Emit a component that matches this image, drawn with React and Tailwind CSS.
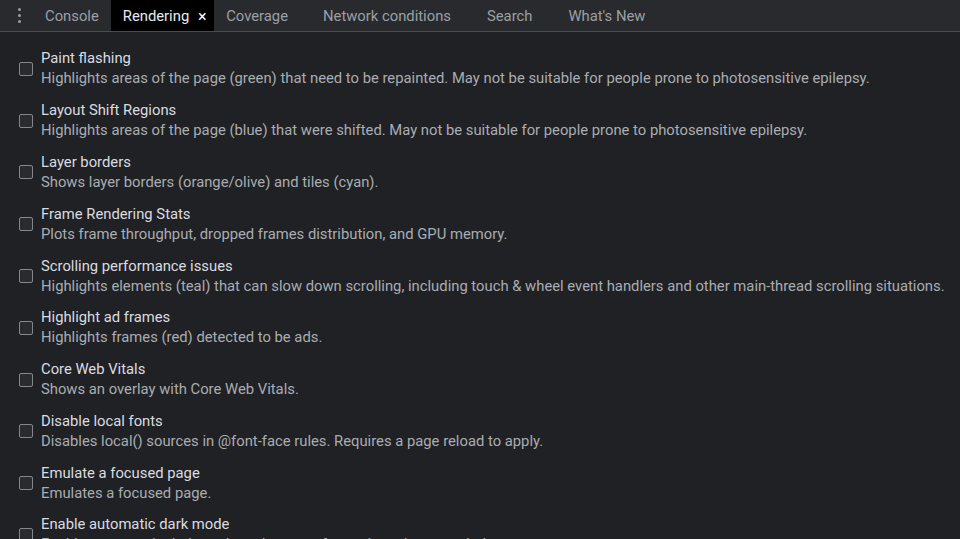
const options = [
  {
    title: "Paint flashing",
    desc: "Highlights areas of the page (green) that need to be repainted. May not be suitable for people prone to photosensitive epilepsy.",
  },
  {
    title: "Layout Shift Regions",
    desc: "Highlights areas of the page (blue) that were shifted. May not be suitable for people prone to photosensitive epilepsy.",
  },
  { title: "Layer borders", desc: "Shows layer borders (orange/olive) and tiles (cyan)." },
  {
    title: "Frame Rendering Stats",
    desc: "Plots frame throughput, dropped frames distribution, and GPU memory.",
  },
  {
    title: "Scrolling performance issues",
    desc: "Highlights elements (teal) that can slow down scrolling, including touch & wheel event handlers and other main-thread scrolling situations.",
  },
  { title: "Highlight ad frames", desc: "Highlights frames (red) detected to be ads." },
  { title: "Core Web Vitals", desc: "Shows an overlay with Core Web Vitals." },
  {
    title: "Disable local fonts",
    desc: "Disables local() sources in @font-face rules. Requires a page reload to apply.",
  },
  { title: "Emulate a focused page", desc: "Emulates a focused page." },
  {
    title: "Enable automatic dark mode",
    desc: "Enables automatic dark mode and sets prefers-color-scheme to dark.",
  },
];

const App = () => {
  return (
    <div
      className="w-[960px] h-[539px] overflow-hidden bg-[#202124] text-[14.8px]"
      style={{ fontFamily: "Roboto, 'Liberation Sans', sans-serif" }}
    >
      {/* tab strip */}
      <div className="h-[32px] flex items-stretch bg-[#292a2d] border-b border-[#4a4c50]">
        <div className="w-[40px] flex flex-col items-center justify-center gap-[3px] pr-[2px]">
          <span className="w-[3px] h-[3px] rounded-full bg-[#9aa0a6]" />
          <span className="w-[3px] h-[3px] rounded-full bg-[#9aa0a6]" />
          <span className="w-[3px] h-[3px] rounded-full bg-[#9aa0a6]" />
        </div>
        <div className="flex items-center pt-[2px] pl-[5px] pr-[12px] text-[#9aa0a6]">Console</div>
        <div className="flex items-center pt-[2px] bg-black pl-[12px] pr-[6px] text-[#e8eaed]">
          Rendering
          <span className="ml-[7px] w-[12px] text-center text-[16px] text-white">×</span>
        </div>
        <div className="flex items-center pt-[2px] pl-[12px] pr-[17px] text-[#9aa0a6]">Coverage</div>
        <div className="flex items-center pt-[2px] pl-[18px] pr-[18px] text-[#9aa0a6]">Network conditions</div>
        <div className="flex items-center pt-[2px] pl-[18px] pr-[18px] text-[#9aa0a6]">Search</div>
        <div className="flex items-center pt-[2px] pl-[18px] pr-[18px] text-[#9aa0a6]">What's New</div>
      </div>

      {/* rendering options */}
      <div className="pt-[11px]">
        {options.map((opt) => (
          <div key={opt.title} className="flex items-center py-[6.4px] pl-[19px]">
            <span className="w-[14px] h-[14px] shrink-0 rounded-[2px] border border-[#85878a] bg-[#2a2b2e]" />
            <div className="ml-[8px] leading-[19px] whitespace-nowrap">
              <div className="text-[#dadce0]">{opt.title}</div>
              <div className="text-[#a9adb2] mt-[1px]">{opt.desc}</div>
            </div>
          </div>
        ))}
      </div>
    </div>
  );
};

export default App;
